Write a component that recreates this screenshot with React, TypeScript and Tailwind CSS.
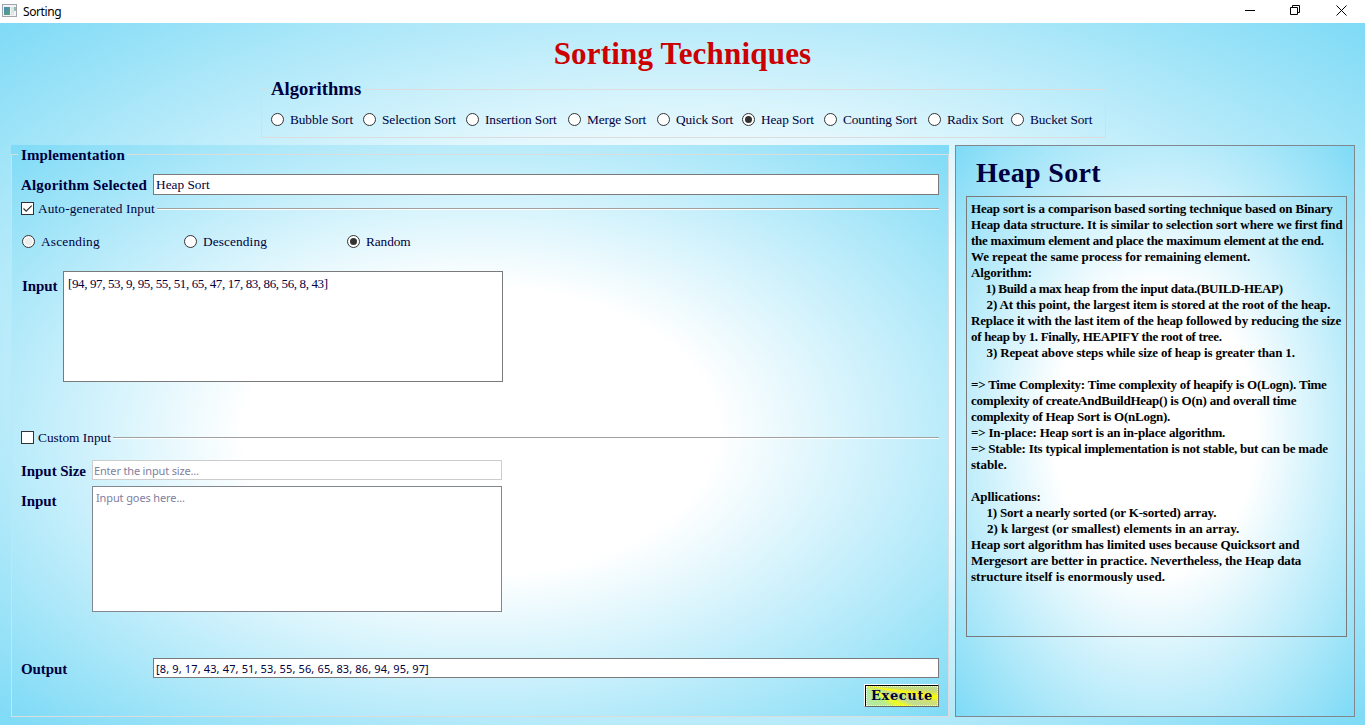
import React from "react";

const SERIF = "font-['Liberation_Serif',serif]";
const SKY = "bg-[radial-gradient(ellipse_70%_70%_at_50%_50%,#ffffff_36%,#80dbf6_100%)]";

const algorithms = [
  { name: "Bubble Sort", width: 92 },
  { name: "Selection Sort", width: 103 },
  { name: "Insertion Sort", width: 102 },
  { name: "Merge Sort", width: 89 },
  { name: "Quick Sort", width: 85 },
  { name: "Heap Sort", width: 82 },
  { name: "Counting Sort", width: 104 },
  { name: "Radix Sort", width: 83 },
  { name: "Bucket Sort", width: 84 },
];

const description: { text: string; spacing: number }[] = [
  { text: "Heap sort is a comparison based sorting technique based on Binary", spacing: -0.17 },
  { text: "Heap data structure. It is similar to selection sort where we first find", spacing: -0.1 },
  { text: "the maximum element and place the maximum element at the end.", spacing: -0.25 },
  { text: "We repeat the same process for remaining element.", spacing: -0.06 },
  { text: "Algorithm:", spacing: -0.1 },
  { text: "     1) Build a max heap from the input data.(BUILD-HEAP)", spacing: -0.37 },
  { text: "     2) At this point, the largest item is stored at the root of the heap.", spacing: -0.14 },
  { text: "Replace it with the last item of the heap followed by reducing the size", spacing: -0.17 },
  { text: "of heap by 1. Finally, HEAPIFY the root of tree.", spacing: -0.31 },
  { text: "     3) Repeat above steps while size of heap is greater than 1.", spacing: -0.14 },
  { text: "", spacing: 0 },
  { text: "=> Time Complexity: Time complexity of heapify is O(Logn). Time", spacing: -0.23 },
  { text: "complexity of createAndBuildHeap() is O(n) and overall time", spacing: -0.23 },
  { text: "complexity of Heap Sort is O(nLogn).", spacing: -0.25 },
  { text: "=> In-place: Heap sort is an in-place algorithm.", spacing: -0.19 },
  { text: "=> Stable: Its typical implementation is not stable, but can be made", spacing: -0.24 },
  { text: "stable.", spacing: 0 },
  { text: "", spacing: 0 },
  { text: "Apllications:", spacing: -0.08 },
  { text: "     1) Sort a nearly sorted (or K-sorted) array.", spacing: -0.17 },
  { text: "     2) k largest (or smallest) elements in an array.", spacing: -0.03 },
  { text: "Heap sort algorithm has limited uses because Quicksort and", spacing: -0.08 },
  { text: "Mergesort are better in practice. Nevertheless, the Heap data", spacing: -0.13 },
  { text: "structure itself is enormously used.", spacing: 0.03 },
];

function Radio({ label, checked = false, pressed = false }: { label: string; checked?: boolean; pressed?: boolean }) {
  return (
    <div className="flex h-[15px] items-center gap-[6px] whitespace-nowrap">
      <svg width="13" height="13" viewBox="0 0 13 13" className="shrink-0">
        <circle cx="6.5" cy="6.5" r="6" fill="#fff" stroke="#333" />
        {checked && <circle cx="6.5" cy="6.5" r="3.5" fill="#333" />}
        {pressed && <circle cx="6.5" cy="6.5" r="4" fill="#eee" />}
      </svg>
      <span className="text-[13.33px] leading-[15px]">{label}</span>
    </div>
  );
}

function CheckHeader({ label, checked = false }: { label: string; checked?: boolean }) {
  return (
    <div className="flex h-[15px] items-center whitespace-nowrap">
      <svg width="13" height="13" viewBox="0 0 13 13" className="shrink-0">
        <rect x="0.5" y="0.5" width="12" height="12" fill="#fff" stroke="#333" />
        {checked && <path d="M2.5 6.5 5.2 9.2 10.7 3.7" fill="none" stroke="#333" strokeWidth="1.2" />}
      </svg>
      <span className={`pl-1 text-[13.33px] leading-[15px] ${checked ? "tracking-[0.12px]" : ""}`}>{label}</span>
      <span className="ml-0.5 h-0.5 flex-1 border-t border-[#a0a0a0] bg-white" />
    </div>
  );
}

function TitleBar() {
  return (
    <header className="flex h-[23px] shrink-0 items-center bg-white">
      <svg width="15" height="13" viewBox="0 0 15 13" className="ml-[2px] -mt-[2px]">
        <defs>
          <linearGradient id="app" x1="0" y1="0" x2="1" y2="1">
            <stop offset="0" stopColor="#4a86b8" />
            <stop offset="1" stopColor="#58a878" />
          </linearGradient>
        </defs>
        <rect x="0.5" y="0.5" width="14" height="12" fill="#f4f4f4" stroke="#a0a4ac" />
        <rect x="2" y="3" width="6" height="8" fill="url(#app)" />
        <rect x="9" y="3" width="3" height="8" fill="#e0e3e6" />
        <rect x="12" y="3" width="2" height="4" fill="#8fc0b4" />
      </svg>
      <span className="ml-[6px] font-['Noto_Sans',sans-serif] text-[12px] leading-[16px] tracking-[-0.4px] text-black">Sorting</span>
      <svg width="102" height="12" viewBox="0 0 102 12" className="-mt-[3px] ml-auto mr-[18px]" fill="none" stroke="#000">
        <path d="M0 6.5H10" />
        <path d="M45.5 3.5h7v7h-7zM47.5 3.5v-2h7v7h-2" />
        <path d="M91.5 1.5l10 10M101.5 1.5l-10 10" />
      </svg>
    </header>
  );
}

function Implementation() {
  const bold = "font-bold text-[15px] leading-[18px] whitespace-nowrap";
  return (
    <section className={`flex h-[572px] w-[938px] flex-col ${SKY}`}>
      <div className="flex h-[19px] shrink-0 items-center">
        <span className="h-px w-[7px] bg-[#dcdcdc]" />
        <span className={`ml-[3px] tracking-[0.1px] ${bold}`}>Implementation</span>
        <span className="ml-[2px] h-px flex-1 bg-[#dcdcdc]" />
      </div>
      <div className="-mt-[10px] flex flex-1 flex-col border-x border-b border-[#dcdcdc] pl-[9px] pr-[9px] pt-[20px]">
        <div className="flex h-[21px] items-center">
          <span className={`w-[132px] tracking-[0.17px] ${bold}`}>Algorithm Selected</span>
          <div className="h-[21px] flex-1 border border-[#7a7a7a] bg-white pl-[2px] text-[13.33px] leading-[19px]">Heap Sort</div>
        </div>
        <div className="mt-[6px]">
          <CheckHeader label="Auto-generated Input" checked />
        </div>
        <div className="mt-[18px] flex pl-px">
          <div className="w-[162px] tracking-[0.2px]"><Radio label="Ascending" pressed /></div>
          <div className="w-[163px] tracking-[0.1px]"><Radio label="Descending" /></div>
          <div className="tracking-[-0.1px]"><Radio label="Random" checked /></div>
        </div>
        <div className="mt-[22px] flex pl-px">
          <span className={`w-[41px] pt-[6px] tracking-[-0.1px] ${bold}`}>Input</span>
          <div className="h-[111px] w-[440px] border border-[#7a7a7a] bg-white pl-1 pt-1 text-[13px] leading-[16px] tracking-[-0.38px]">
            [94, 97, 53, 9, 95, 55, 51, 65, 47, 17, 83, 86, 56, 8, 43]
          </div>
        </div>
        <div className="mt-[48px]">
          <CheckHeader label="Custom Input" />
        </div>
        <div className="mt-[15px] flex items-center">
          <span className={`w-[71px] pt-[2px] tracking-[-0.05px] ${bold}`}>Input Size</span>
          <div className="h-[20px] w-[410px] border border-[#cccccc] bg-white pl-px font-['Noto_Sans',sans-serif] text-[11px] leading-[19px] tracking-[-0.17px] text-[#8080a0]">
            Enter the input size...
          </div>
        </div>
        <div className="mt-[6px] flex">
          <span className={`w-[71px] pt-[6px] tracking-[-0.1px] ${bold}`}>Input</span>
          <div className="h-[126px] w-[410px] border border-[#82878f] bg-white pl-[3px] pt-[3px] font-['Noto_Sans',sans-serif] text-[11px] leading-[16px] tracking-[-0.12px] text-[#8080a0]">
            Input goes here...
          </div>
        </div>
        <div className="mt-[46px] flex items-center">
          <span className={`w-[132px] pt-[2px] tracking-[-0.1px] ${bold}`}>Output</span>
          <div className="h-[20px] flex-1 border border-[#7a7a7a] bg-white pl-[2px] font-['Noto_Sans',sans-serif] text-[11px] leading-[19px] tracking-[0.14px]">
            [8, 9, 17, 43, 47, 51, 53, 55, 56, 65, 83, 86, 94, 95, 97]
          </div>
        </div>
        <button className="mt-[6px] h-[23px] w-[75px] self-end border border-b-[#6a6a6a] border-l-white border-r-[#6a6a6a] border-t-white">
          <span className="flex h-full items-center justify-center border-l border-t border-black bg-[conic-gradient(from_90deg_at_0%_0%,#b8dc98_0deg,#c8d87c_4deg,#ffff00_9deg,#d0e070_13deg,#c0dc98_20deg,#f0fc20_27deg,#e0f840_33deg,#b8ec90_42deg,#b4e8a8_90deg)]">
            <span className="flex h-full w-full items-center justify-center border border-dotted border-white font-['DejaVu_Serif',serif] text-[13px] font-bold leading-[18px] tracking-[0.6px]">
              Execute
            </span>
          </span>
        </button>
      </div>
    </section>
  );
}

export default function App() {
  return (
    <div className={`flex h-[725px] w-[1365px] flex-col overflow-hidden text-[#000040] ${SERIF}`}>
      <TitleBar />
      <main className={`flex flex-1 flex-col ${SKY}`}>
        <h1 className="mt-[10px] h-[45px] whitespace-nowrap text-center font-['Old_English_Text_MT','Liberation_Serif',serif] text-[31px] font-bold leading-[42px] tracking-[0.2px] text-[#cc0000]">
          Sorting Techniques
        </h1>
        <section className="ml-[261px] flex h-[60px] w-[845px] flex-col">
          <div className="flex h-[23px] items-center">
            <span className="h-px w-[7px] bg-[#dcdcdc]" />
            <h2 className="ml-[3px] whitespace-nowrap pb-[2px] text-[18.67px] font-bold leading-[21px]">Algorithms</h2>
            <span className="ml-[3px] h-px flex-1 bg-[#dcdcdc]" />
          </div>
          <div className="-mt-[12px] flex flex-1 items-center border-x border-b border-[#dcdcdc] pl-[9px] pt-[12px] tracking-[-0.09px]">
            {algorithms.map((a) => (
              <div key={a.name} className="shrink-0" style={{ width: a.width }}>
                <Radio label={a.name} checked={a.name === "Heap Sort"} />
              </div>
            ))}
          </div>
        </section>
        <div className="mt-[7px] flex gap-[6px] pl-[11px]">
          <Implementation />
          <aside className={`h-[572px] w-[400px] border border-[#82878f] pl-[10px] ${SKY}`}>
            <h2 className="h-[50px] whitespace-nowrap pl-[10px] pt-[10px] text-[28px] font-bold leading-[34px] tracking-[0.3px]">Heap Sort</h2>
            <div className="h-[441px] w-[381px] border border-[#7a7a7a] pl-1 pt-1 text-[13px] font-bold leading-[16px] text-black">
              {description.map((line, i) => (
                <div key={i} className="h-4 whitespace-pre" style={{ letterSpacing: line.spacing }}>{line.text}</div>
              ))}
            </div>
          </aside>
        </div>
      </main>
    </div>
  );
}
